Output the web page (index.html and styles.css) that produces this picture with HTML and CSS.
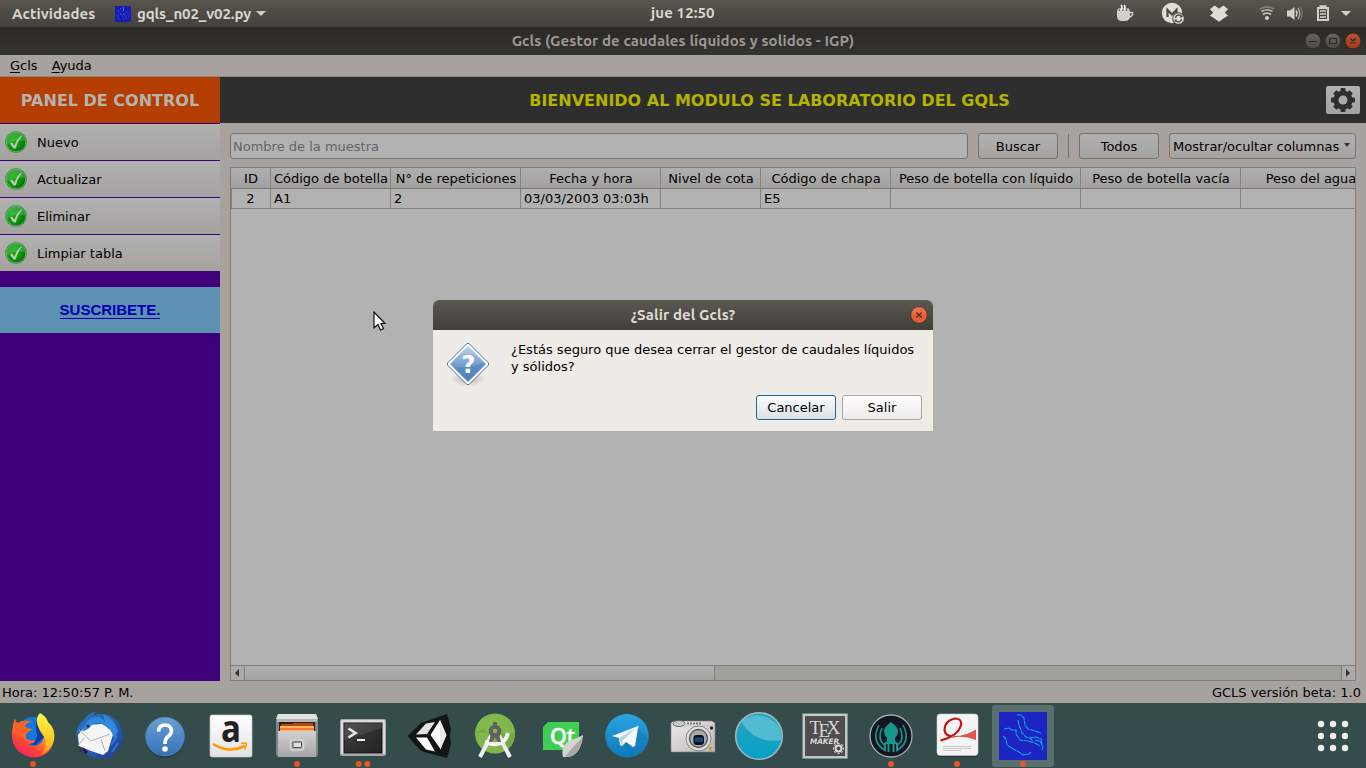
FILE: index.html
```html
<!DOCTYPE html>
<html lang="es">
<head>
<meta charset="utf-8">
<title>Gcls</title>
<link rel="stylesheet" href="styles.css">
</head>
<body>
<div class="desktop">
  <header class="topbar">
    <span class="activities">Actividades</span>
    <svg class="app-icon" width="16" height="16" viewBox="0 0 16 16"><rect width="16" height="16" fill="#1a1ab4"/><path d="M8.500 1v4M5 2.500h1M3 5h1M5 7l1 1.500M11 6h1M12.500 7.500h1M8 8h1v1M7 10h1M10 10h1M13.500 10h1M2 10h1M3 12h1M11 12h1M8 13h1" stroke="#1c7fd2" fill="none"/></svg>
    <span class="app-name">gqls_n02_v02.py</span>
    <i class="caret"></i>
    <span class="clock">jue 12:50</span>
    <svg class="tray" width="256" height="27" viewBox="0 0 256 27">
      <g fill="#d2d0ca">
        <path d="M7 11h13v5q0 5-5 5h-3q-5 0-5-5z"/><path d="M19 12.500h3.500q1 3.500-4 5" fill="none" stroke="#d2d0ca" stroke-width="1.500"/>
        <path d="M8 8.500h11l1 3H7z"/><path d="M11 5q2 2 0 5M14 5q2 2 0 5" fill="none" stroke="#fff" stroke-width="1.500"/><path d="M9.500 9.500v1.500M13 9v2M16.500 9v2" stroke="#55524b"/>
        <circle cx="62" cy="13" r="10.200" fill="#e0ddd5"/><path d="M57.500 17v-7l4.500 4.500 4.500-4.500v3" fill="none" stroke="#4b4943" stroke-width="2.200"/>
        <circle cx="68.500" cy="18.500" r="6.300" fill="#4b4943"/><circle cx="68.500" cy="18.500" r="5.300" fill="#e0ddd5"/><path d="M65.500 18q.5-3 3-3 2 0 3 1.800M71.500 19q-.5 3-3 3-2 0-3-1.800" fill="none" stroke="#4b4943" stroke-width="1.300"/><path d="M72.500 14.500v3h-3zM64.500 22.500v-3h3z" fill="#4b4943"/>
        <path d="M104.500 5.500l4.500 3 4.500-3 4.500 3.700-3.300 3.300 3.300 3.300-3.500 2-5.500 4-5.500-4-3.500-2 3.300-3.300-3.300-3.300z" fill="#e0ddd5"/>
        <circle cx="157" cy="18" r="2"/>
        <path d="M153 14.500q4-3 8 0" fill="none" stroke="#d2d0ca" stroke-width="1.600"/><path d="M151.500 11.500q5.500-3.500 11 0" fill="none" stroke="#b6b4ae" stroke-width="1.500"/><path d="M150 9q7-4 14 0" fill="none" stroke="#84817a" stroke-width="1.500"/>
        <path d="M177 10.500h3l4.500-3.500v13L180 16.500h-3z"/><path d="M186 10.500q2 3 0 6" fill="none" stroke="#d2d0ca" stroke-width="1.400"/><path d="M188 8q3.500 5.500 0 11" fill="none" stroke="#a5a29c" stroke-width="1.500"/><path d="M190.300 6.500q3.500 7 0 13.500" fill="none" stroke="#74726b" stroke-width="1.300"/>
        <path d="M207 7h2.500V5.200h7V7h2.500v14h-12zM209 9v10h8V9z" fill-rule="evenodd"/><path d="M210 11h6M210 14h6M210 17h6" stroke="#d2d0ca" stroke-width="1.600"/>
        <path d="M231 11h10l-5 5z"/>
      </g>
    </svg>
  </header>

  <div class="titlebar">
    <span class="window-title">Gcls (Gestor de caudales líquidos y solidos - IGP)</span>
    <svg class="window-buttons" width="60" height="28" viewBox="0 0 60 28">
      <defs><linearGradient id="wb" x2="0" y2="1"><stop stop-color="#65645f"/><stop offset="1" stop-color="#4a4944"/></linearGradient><linearGradient id="wc" x2="0" y2="1"><stop stop-color="#ba5236"/><stop offset="1" stop-color="#a73a15"/></linearGradient></defs>
      <circle cx="7" cy="14" r="7.800" fill="url(#wb)" stroke="#21201d" stroke-width=".5"/><circle cx="27" cy="14" r="7.800" fill="url(#wb)" stroke="#21201d" stroke-width=".5"/><circle cx="47" cy="14" r="7.800" fill="url(#wc)" stroke="#21201d" stroke-width=".5"/>
      <path d="M3 14.500h8M23.500 11.500h7v5h-7zM44.500 11.500l5 5M49.500 11.500l-5 5" fill="none" stroke="#2b2a26" stroke-width="1.200"/>
    </svg>
  </div>

  <nav class="menubar"><span><u>G</u>cls</span><span><u>A</u>yuda</span></nav>

  <main class="main">
    <aside class="sidebar">
      <div class="panel-title">PANEL DE CONTROL</div>
      <div class="side-button"><svg width="22" height="22" viewBox="0 0 22 22"><use href="#check"/></svg>Nuevo</div>
      <div class="side-button"><svg width="22" height="22" viewBox="0 0 22 22"><use href="#check"/></svg>Actualizar</div>
      <div class="side-button"><svg width="22" height="22" viewBox="0 0 22 22"><use href="#check"/></svg>Eliminar</div>
      <div class="side-button"><svg width="22" height="22" viewBox="0 0 22 22"><use href="#check"/></svg>Limpiar tabla</div>
      <div class="subscribe"><span>SUSCRIBETE.</span></div>
    </aside>
    <section class="content">
      <div class="banner">
        <span>BIENVENIDO AL MODULO SE LABORATORIO DEL GQLS</span>
        <div class="gear"><svg width="24" height="24" viewBox="-12 -12 24 24"><g fill="#2e2e2e"><circle r="9.600"/><g id="teeth"><rect x="-2.500" y="-12" width="5" height="24" rx="1"/><rect x="-12" y="-2.500" width="24" height="5" rx="1"/></g><use href="#teeth" transform="rotate(45) scale(.96)"/></g><circle r="4.500" fill="#aba9a7"/></svg></div>
      </div>
      <div class="toolbar">
        <div class="field">Nombre de la muestra</div>
        <div class="button">Buscar</div>
        <i class="separator"></i>
        <div class="button">Todos</div>
        <div class="button combo">Mostrar/ocultar columnas<i></i></div>
      </div>
      <div class="table">
        <div class="row head"><b>ID</b><b>Código de botella</b><b>N° de repeticiones</b><b>Fecha y hora</b><b>Nivel de cota</b><b>Código de chapa</b><b>Peso de botella con líquido</b><b>Peso de botella vacía</b><b>Peso del agua</b></div>
        <div class="row data"><b>2</b><b>A1</b><b>2</b><b>03/03/2003 03:03h</b><b></b><b>E5</b><b></b><b></b><b></b></div>
        <div class="blank"></div>
        <div class="scrollbar"><i class="arrow left"></i><i class="thumb"></i><i class="track"></i><i class="arrow right"></i></div>
      </div>
    </section>
  </main>

  <div class="statusbar"><span>Hora: 12:50:57 P. M.</span><span>GCLS versión beta: 1.0</span></div>

  <footer class="dock">
    <svg viewBox="0 0 66 65"><defs><linearGradient id="ff" x1=".9" y1="0" x2=".2" y2="1"><stop stop-color="#ffe226"/><stop offset=".4" stop-color="#ff9a1c"/><stop offset=".7" stop-color="#ff4438"/><stop offset="1" stop-color="#f0196a"/></linearGradient><linearGradient id="ff2" x2="0" y2="1"><stop stop-color="#fff44a"/><stop offset=".7" stop-color="#ffc51f"/><stop offset="1" stop-color="#ff8a17"/></linearGradient></defs>
      <circle cx="33" cy="29" r="15" fill="#1277de"/><path d="M36 18q10 6 8 16l-8 8-8-1q12-3 8-13z" fill="#123c9f"/>
      <path d="M15 16q1 4 3 4 6-3 9-2-3 3-2 6 3 2 6 2l-5 5q-1 5 3 6l7 1q-4 4-9 3 8 5 15-2 5-8 0-16 10 1 12 8 1 11-6 18-8 7-18 5-13-3-17-14-3-11 2-24z" fill="url(#ff)"/>
      <path d="M15 16q1 4 3 4 6-3 14-2-7 3-7 6 3 2 8 2l-8 5q-6 1-10-4-3-5 0-11z" fill="#f9632a"/>
      <path d="M40 10q6 3 8 9 8 7 6 18-3 10-13 15 7-8 4-17-7-9-8-15-1-6 3-10z" fill="url(#ff2)"/><circle cx="33" cy="61" r="3" fill="#e95420"/></svg>

    <svg viewBox="0 0 66 65"><defs><linearGradient id="tb" x2="1" y2="1"><stop stop-color="#2477c9"/><stop offset=".5" stop-color="#2461b5"/><stop offset="1" stop-color="#233489"/></linearGradient></defs>
      <path d="M12 38q-5-13 6-21 5-8 12-8-2 2-2 3 12-4 22 5 7 8 7 18-1 9-6 14l1-5q-3 7-9 12l-4 1 2-5-6 4q-15 0-23-18z" fill="url(#tb)"/><path d="M12 37l7 14 3-2M13 43l4 8-3-4z" fill="#28145b"/>
      <path d="M12 32l8-10 16-1 12 7-6 20-5 4-12-4-12-5z" fill="#f5f5f5"/><path d="M13 27l12 11 19-7M12 43l6-8M39 48l-4-12" stroke="#b2b2b2" fill="none"/>
      <path d="M18 24q4-10 14-10 4 1 7 5l-2-8q12 5 15 17l-4 8q-2-11-14-16-6-1-9 3-4 5-9 5z" fill="#3089d9"/><circle cx="22" cy="23" r="1.600" fill="#173763"/><path d="M45 42l6-9M46 49l6-9" stroke="#2d75ce" stroke-width="2"/></svg>

    <svg viewBox="0 0 66 65"><defs><linearGradient id="he" x2="0" y2="1"><stop stop-color="#6aa1d6"/><stop offset="1" stop-color="#3272b5"/></linearGradient></defs><circle cx="33" cy="35" r="20" fill="#25414b"/><circle cx="33" cy="33.500" r="19.300" fill="url(#he)" stroke="#4f80ae"/><path d="M26.500 28.500q.5-6.500 6.500-6.500t6.500 6q0 3-4 6-2.500 2-2.500 7" fill="none" stroke="#fff" stroke-width="3.600"/><circle cx="33" cy="46" r="2.800" fill="#fff"/></svg>

    <svg viewBox="0 0 66 65"><defs><linearGradient id="am" x2="0" y2="1"><stop stop-color="#fff"/><stop offset="1" stop-color="#e2e2e2"/></linearGradient></defs><rect x="12" y="12" width="42" height="42" rx="2" fill="url(#am)" stroke="#c2c4c4" stroke-width=".7"/><text x="23" y="39" class="amazon-a" textLength="20" lengthAdjust="spacingAndGlyphs">a</text><path d="M15 41q16 10 32 2" fill="none" stroke="#ff9700" stroke-width="2.600"/><path d="M43 40.500q5-1 5.500 0t-2 6" fill="none" stroke="#ff9700" stroke-width="1.500"/></svg>

    <svg viewBox="0 0 66 65"><defs><linearGradient id="fi" x2="0" y2="1"><stop stop-color="#d1d1d1"/><stop offset="1" stop-color="#a6a6a6"/></linearGradient></defs><path d="M14 11h38l2 5v34q0 4-3 4H15q-3 0-3-4V16z" fill="#858585"/><path d="M14 11h38l2 5H12z" fill="#e0e0e0"/><path d="M13 16h40v3H13z" fill="#b6b6b6"/><rect x="15" y="19" width="36" height="10" fill="#29231f"/><path d="M17 21h12v-1h20v9H17z" fill="#b94510"/><path d="M16 23h34v6H16z" fill="#fbb265"/><path d="M16 26h34" stroke="#ef7d2a" stroke-width="2"/><path d="M14 28h38v26H14z" fill="url(#fi)"/><rect x="26.500" y="37" width="13" height="10" rx="2" fill="#aaa" stroke="#d9d9d9" stroke-width="1.500"/><rect x="29" y="39" width="8.500" height="5.500" rx="1" fill="#ddd" stroke="#4e4e4e"/><circle cx="33" cy="61" r="3" fill="#e95420"/></svg>

    <svg viewBox="0 0 66 65"><defs><linearGradient id="te" x2="1" y2="1"><stop stop-color="#464646"/><stop offset=".5" stop-color="#303030"/><stop offset="1" stop-color="#242424"/></linearGradient></defs><rect x="10" y="16" width="46" height="37" rx="2" fill="#aaa5a8"/><rect x="11" y="17" width="44" height="34" rx="1" fill="#ddd9dc"/><rect x="14" y="20" width="38" height="30" fill="url(#te)" stroke="#111"/><path d="M14 37L52 25v-5H14z" fill="#777" opacity=".25"/><path d="M18.500 25.500l7 4.500-7 4.500" fill="none" stroke="#e7e7e7" stroke-width="2.600"/><path d="M27 37h8" stroke="#eee" stroke-width="2"/><circle cx="28.700" cy="61" r="3" fill="#e95420"/><circle cx="37.300" cy="61" r="3" fill="#e95420"/></svg>

    <svg viewBox="0 0 66 65"><path d="M11.500 33L25 20l3-1 23-8 4 15-1 7 1 8-4 14-23-6-4-2z" fill="#141414"/><path d="M20 31.500l10-11 9-1.500-8 12z" fill="#e2e2e2"/><path d="M20 34.500h11l8 14-9-2z" fill="#fff"/><path d="M34.500 32l9.500-15 6.500 15-6 14z" fill="#fff"/><path d="M44 17l6 16-6 14z" fill="#e9e9e9"/></svg>

    <svg viewBox="0 0 66 65"><circle cx="33" cy="30.500" r="20" fill="#82b84b"/><path d="M13 30h40q0 12-9 18l-22-22z" fill="#73ab42"/><path d="M29 33L18 54M37 33l11 21" stroke="#eee" stroke-width="4"/><path d="M23 39q19 7 23-9" fill="none" stroke="#f4f4f4" stroke-width="4"/><circle cx="33" cy="28" r="4.300" fill="none" stroke="#616161" stroke-width="4"/><path d="M31 19h4v6h-4zM29 31l-2 8h3l3-5 3 5h3l-2-8z" fill="#616161"/></svg>

    <svg viewBox="0 0 66 65"><path d="M20 19h31v28H15V24z" fill="#40cd52"/><text x="22" y="40.500" class="qt" textLength="25" lengthAdjust="spacingAndGlyphs">Qt</text><path d="M35 54q-3-12 8-17 7-2 12-5-2 20-15 22z" fill="#d4d4d2"/><path d="M36 53q8-9 18-19-1 18-14 20z" fill="#aaa9a7"/><path d="M36 54q7-9 17-19" stroke="#f0f0ee" fill="none" stroke-width=".7"/></svg>

    <svg viewBox="0 0 66 65"><defs><linearGradient id="tg" x2="0" y2="1"><stop stop-color="#2ba5e2"/><stop offset="1" stop-color="#0e79b8"/></linearGradient></defs><circle cx="33" cy="32.700" r="21.700" fill="url(#tg)"/><path d="M43 24l12 12q-3 14-14 18L29 41z" fill="#1279b4" opacity=".5"/><path d="M18 33l26-10q1 0 0 2l-3 18-2 1-7-5-4 4-2-1-1-7z" fill="#f5f9fc"/><path d="M25 35l17-10-13 12-1 5z" fill="#b8d3e5"/></svg>

    <svg viewBox="0 0 66 65"><defs><linearGradient id="ca" x2="1" y2="1"><stop stop-color="#eee"/><stop offset="1" stop-color="#b6b3b0"/></linearGradient></defs><path d="M12 19l3-1h37l3 2v29H11V20z" fill="url(#ca)" stroke="#7b7b79" stroke-width=".6"/><path d="M12 23h42" stroke="#bbb" stroke-width=".6"/><ellipse cx="19" cy="20.500" rx="6" ry="3" fill="#c9c9c8" stroke="#555" stroke-width=".8"/><path d="M27 20.500h15" stroke="#777" stroke-width="2" stroke-dasharray="2 1"/><circle cx="51.500" cy="25" r="1.700" fill="#222"/><circle cx="38.500" cy="35.500" r="12.500" fill="#ddd" stroke="#858585"/><circle cx="38.500" cy="35.500" r="9" fill="#aaa" stroke="#555" stroke-width="1.300"/><rect x="33.500" y="32" width="10.500" height="10" rx="3" fill="#101116"/><rect x="35" y="34.500" width="8" height="4.500" fill="#164579"/><rect x="49" y="44" width="3" height="3" fill="#e89511"/></svg>

    <svg viewBox="0 0 66 65"><defs><linearGradient id="ci" x2="0" y2="1"><stop stop-color="#26a5bd"/><stop offset="1" stop-color="#07a0c7"/></linearGradient></defs><circle cx="33" cy="33" r="23.300" fill="url(#ci)" stroke="#a5b8ba" stroke-width="1.500"/><path d="M15 18Q34 5 52 22q4 8 4 15Q28 42 15 18z" fill="#51bbd4"/></svg>

    <svg viewBox="0 0 66 65"><rect x="11.800" y="11.800" width="42.500" height="42.500" fill="#4d4d4d" stroke="#c6c8c8" stroke-width="2.500"/><text x="17.500" y="30.500" class="tex">T<tspan dx="-2.500" dy="3.500">E</tspan><tspan dx="-3.500" dy="-3.500">X</tspan></text><text x="18" y="41" class="maker" textLength="29" lengthAdjust="spacingAndGlyphs">MAKER</text><circle cx="46.500" cy="45.500" r="3" fill="none" stroke="#ddd" stroke-width="2"/><path d="M46.500 41v-1M46.500 50v1M42 45.500h-1M51 45.500h1M43.300 42.300l-.7-.7M49.700 48.700l.7.700M49.700 42.300l.7-.7M43.300 48.700l-.7.700" stroke="#ddd" stroke-width="2"/></svg>

    <svg viewBox="0 0 66 65"><circle cx="33" cy="33" r="21" fill="#141523" stroke="#a6b0b0" stroke-width="1.300"/><path d="M26 28q0-4 7-9 7 5 7 9 0 4-3 7v3l3 2v7h-2v-6h-1.500v8h-2v-8h-3v8h-2v-8H28v6h-2v-7l3-2v-3q-3-3-3-7z" fill="#17978b"/><path d="M21 22q-9 17 7 26M45 22q9 17-7 26M24 25q-5 11 2 17M42 25q5 11-2 17" fill="none" stroke="#17978b" stroke-width="1.600"/><circle cx="33" cy="61" r="3" fill="#e95420"/></svg>

    <svg viewBox="0 0 66 65"><rect x="13" y="12" width="41" height="42" rx="3" fill="#223735"/><rect x="13" y="11" width="41" height="41.500" rx="3" fill="#f4f4f4" stroke="#ccc" stroke-width=".6"/><path d="M16.500 37.500Q34 33 37 22q1-6.500-6-6.500-10 2-10.500 11 0 7 10 7" fill="none" stroke="#c91114" stroke-width="2.200"/><path d="M28 33q12 1 24-6.500V37q-12-5-24-2.500z" fill="#de5550"/><path d="M19 43.500h28M19 45.500h28M19 47.500h18" stroke="#bbb" stroke-width=".8"/><circle cx="33" cy="61" r="3" fill="#e95420"/></svg>

    <svg viewBox="0 0 66 65"><rect x="2" y="2" width="62" height="62" rx="3" fill="#58706d"/><rect x="9" y="9" width="48" height="48" fill="#1c24c4"/><path d="M27 12h4l3 3 1 7 3 4 7 2 6 2 M28 17l1 5 3 8 4 4 4 1 3 3M14 26l5-1 3 2 4 0 0 4 4 6 8 1 7 2 5 3M39 35l7-1 5 2 1 5M45 37l5 1 3 6-1 3M13 33l3 3 1 6 8 5 4 2 4 3 6-1 2-2" fill="none" stroke="#13a9e2" stroke-width="1.100" stroke-dasharray="5 .5"/><circle cx="33" cy="61" r="3" fill="#e95420"/></svg>

    <svg class="apps" viewBox="0 0 66 65"><g fill="#f0efed"><circle cx="21" cy="21" r="3.200"/><circle cx="33" cy="21" r="3.200"/><circle cx="45" cy="21" r="3.200"/><circle cx="21" cy="33" r="3.200"/><circle cx="33" cy="33" r="3.200"/><circle cx="45" cy="33" r="3.200"/><circle cx="21" cy="45" r="3.200"/><circle cx="33" cy="45" r="3.200"/><circle cx="45" cy="45" r="3.200"/></g></svg>
  </footer>

  <section class="dialog">
    <div class="dialog-title"><span>¿Salir del Gcls?</span><svg width="18" height="18" viewBox="0 0 18 18"><circle cx="9" cy="9" r="8.300" fill="#e95d34" stroke="#35332e" stroke-width=".7"/><path d="M2 8a7 7 0 0 1 14 0z" fill="#f07c57" opacity=".6"/><path d="M6.300 6.300l5.400 5.400M11.700 6.300l-5.400 5.400" stroke="#44291f" stroke-width="1.200"/></svg></div>
    <div class="dialog-body">
      <svg width="48" height="48" viewBox="0 0 48 48"><defs><linearGradient id="qu" x2="0" y2="1"><stop stop-color="#b5cee9"/><stop offset=".55" stop-color="#5b8dc6"/><stop offset="1" stop-color="#4d80bd"/></linearGradient><radialGradient id="qs"><stop stop-color="#bdb7b3"/><stop offset="1" stop-color="#efebe7"/></radialGradient></defs><ellipse cx="24" cy="39.500" rx="19" ry="6.500" fill="url(#qs)"/><path d="M22.500 4q1.500-1.500 3 0l18.500 18.500q1.500 1.500 0 3L25.500 44q-1.500 1.500-3 0L4 25.500q-1.500-1.500 0-3z" fill="#fff" stroke="#3e71ad"/><path d="M24 6L42 24 24 42 6 24z" fill="url(#qu)"/><path d="M8 26.500q20 3 34-6L24 6 6 24z" fill="#fff" opacity=".13"/><text x="24.500" y="32.500" text-anchor="middle" class="question">?</text></svg>
      <p>¿Estás seguro que desea cerrar el gestor de caudales líquidos<br>y sólidos?</p>
    </div>
    <div class="dialog-actions"><div class="dialog-button focus">Cancelar</div><div class="dialog-button">Salir</div></div>
  </section>

  <svg class="cursor" width="14" height="21" viewBox="0 0 14 21"><path d="M1 1v16l4-3.500 2.500 5.500 3-1.300L8 12.500h4z" fill="#fff" stroke="#111" stroke-width="1.200"/></svg>

  <svg class="defs" width="0" height="0"><defs><radialGradient id="gr" cx=".35" cy=".4" r=".75"><stop stop-color="#18ad18"/><stop offset=".6" stop-color="#079007"/><stop offset="1" stop-color="#034a03"/></radialGradient><g id="check"><circle cx="11" cy="11" r="10.600" fill="url(#gr)" stroke="#4f9a4f" stroke-width=".8"/><circle cx="11" cy="11" r="9.700" fill="none" stroke="#8fbb8f" stroke-width=".7"/><path d="M2 10a9 9 0 0 1 18 0q-9-2-18 3z" fill="#6cc06c" opacity=".4"/><path d="M5 12.500l2.200-1 2 3.200q2.500-6.500 6.800-10.200l1 .3q-4.500 5.500-6.300 12.700H8.500z" fill="#c0c6c0"/></g></defs></svg>
</div>
</body>
</html>
```
FILE: styles.css
```css
* { box-sizing: border-box; }
body { margin: 0; font-family: "DejaVu Sans", sans-serif; font-size: 13px; color: #000; }
.desktop { position: relative; width: 1366px; height: 768px; overflow: hidden; display: flex; flex-direction: column; background: #a7a29e; white-space: nowrap; }

.topbar, .titlebar, .dialog-title { font-family: Ubuntu, "Noto Sans", sans-serif; font-weight: 600; font-size: 15px; letter-spacing: .11px; }
.topbar { position: relative; height: 27px; flex: none; display: flex; align-items: center; padding-left: 12px; color: #d8d5cf; background: linear-gradient(#58554d, #42413c); }
.activities { width: 83px; }
.app-icon { margin: 0 6px 0 20px; }
.app-name { width: 114px; letter-spacing: -.1px; }
.caret { margin-left: 5px; border: 5px solid transparent; border-top-color: #d0cdc7; border-bottom: 0; }
.clock { position: absolute; left: 651px; top: 0; line-height: 26px; }
.tray { margin-left: auto; }

.titlebar { position: relative; height: 28px; flex: none; background: linear-gradient(#2a2925, #34332e); color: #9b9892; text-align: center; line-height: 28px; }
.window-buttons { position: absolute; right: 0; top: 0; }
.menubar { height: 22px; flex: none; display: flex; gap: 14px; padding-left: 10px; line-height: 21px; border-bottom: 1px solid #8b8884; }
.menubar u { text-underline-offset: 2px; }

.main { height: 604px; flex: none; display: flex; }
.sidebar { width: 220px; background: #40007b; }
.panel-title { height: 46px; line-height: 48px; background: #b33e00; color: #b5b3b1; text-align: center; font-weight: bold; font-size: 16px; }
.side-button { height: 36px; margin-top: 1px; display: flex; align-items: center; gap: 10px; padding-left: 5px; background: linear-gradient(#b1b1b1, #a5a3a0); }
.subscribe { height: 46px; margin-top: 16px; background: #5d91b2; color: #0000b3; display: flex; align-items: center; justify-content: center; font: bold 15px "Liberation Sans", sans-serif; }
.subscribe span { border-bottom: 1px solid #0000b3; line-height: 16px; }

.content { width: 1146px; display: flex; flex-direction: column; }
.banner { position: relative; height: 46px; line-height: 48px; background: #2e2e2e; color: #b3b300; text-align: center; font-weight: bold; font-size: 16px; padding-right: 47px; }
.gear { position: absolute; right: 6px; top: 9px; width: 34px; height: 28px; border-radius: 2px; background: linear-gradient(#b1b1b1, #a5a3a0); display: flex; align-items: center; justify-content: center; }
.toolbar { height: 44px; padding: 10px 10px 8px; display: flex; gap: 10px; }
.field, .button { height: 26px; line-height: 26px; border: 1px solid #75726f; border-radius: 3px; }
.field { width: 738px; padding-left: 2px; background: #b2b2b2; color: #656565; }
.button { width: 80px; text-align: center; background: linear-gradient(#b0b0af, #a5a3a0); }
.separator { width: 1px; height: 24px; background: #75726f; margin-top: 1px; }
.combo { width: 187px; padding-left: 3px; display: flex; gap: 5px; }
.combo i { align-self: center; border: 3px solid transparent; border-top: 4px solid #333; border-bottom: 0; margin-top: -2px; }

.table { width: 1126px; height: 514px; margin-left: 10px; border: 1px solid #7f7d7a; background: #b2b2b2; display: flex; flex-direction: column; overflow: hidden; }
.row { display: grid; grid-template-columns: 40px 120px 130px 140px 100px 130px 190px 160px 140px; flex: none; width: 1150px; }
.row b { font-weight: normal; border-right: 1px solid #858380; border-bottom: 1px solid #7b7976; }
.head b { height: 21px; line-height: 22px; text-align: center; padding-left: 1px; background: linear-gradient(#afafaf, #a3a19e); }
.data b { height: 20px; line-height: 19px; padding-left: 3px; border-bottom-color: #858380; }
.data b:first-child { border-left: 1px solid #858380; text-align: center; padding: 0 1px 0 0; }
.blank { flex: 1; }
.scrollbar { height: 15px; border-top: 1px solid #7f7d7a; display: flex; }
.arrow { width: 14px; background: #abaaa8; display: flex; align-items: center; justify-content: center; }
.left { border-right: 1px solid #7f7d7a; padding-right: 1px; }
.right { border-left: 1px solid #7f7d7a; padding-right: 1px; }
.arrow::after { content: ""; border: 4px solid transparent; }
.left::after { border-right: 4px solid #333; border-left: 0; }
.right::after { border-left: 4px solid #333; border-right: 0; }
.thumb { width: 470px; background: linear-gradient(#b0b0af, #a5a3a0); border-right: 1px solid #7f7d7a; }
.track { flex: 1; background: #a09f9a; }

.statusbar { height: 22px; flex: none; display: flex; justify-content: space-between; padding: 0 5px 0 2px; line-height: 24px; }
.dock { height: 65px; flex: none; display: flex; background: linear-gradient(#344b48, #344d4c 20px); }
.dock svg { width: 66px; height: 65px; flex: none; }
.dock .apps { margin-left: auto; }
.amazon-a { font: bold 38px "Open Sans", sans-serif; fill: #222; }
.qt { font: 500 22px "Noto Sans", sans-serif; fill: #fff; stroke: #fff; stroke-width: .5px; }
.tex { font: 19px "Liberation Serif", serif; fill: #d5d5d5; }
.maker { font: italic bold 7.5px "DejaVu Sans", sans-serif; fill: #d9d9d9; }

.dialog { position: absolute; left: 433px; top: 300px; width: 500px; height: 131px; background: #efebe7; border-radius: 6px 6px 0 0; overflow: hidden; }
.dialog-title { position: relative; height: 30px; line-height: 30px; background: linear-gradient(#5b5850, #403f3a); color: #dfdbd2; text-align: center; }
.dialog-title svg { position: absolute; right: 5px; top: 6px; }
.dialog-body { height: 65px; display: flex; padding: 10px 11px; }
.dialog-body p { margin: 1px 0 0 19px; line-height: 17px; }
.dialog-body svg { flex: none; }
.dialog-actions { display: flex; justify-content: flex-end; gap: 6px; padding-right: 11px; }
.dialog-button { width: 80px; height: 25px; line-height: 23px; text-align: center; border: 1px solid #aaa7a4; border-radius: 3px; background: linear-gradient(#fff, #edebe9); }
.focus { border-color: #206796; background: linear-gradient(#fcfdfe, #dbe1e6); }
.question { font: bold 24px "DejaVu Sans", sans-serif; fill: #fff; }
.cursor { position: absolute; left: 373px; top: 311px; }
.defs { position: absolute; }
```
